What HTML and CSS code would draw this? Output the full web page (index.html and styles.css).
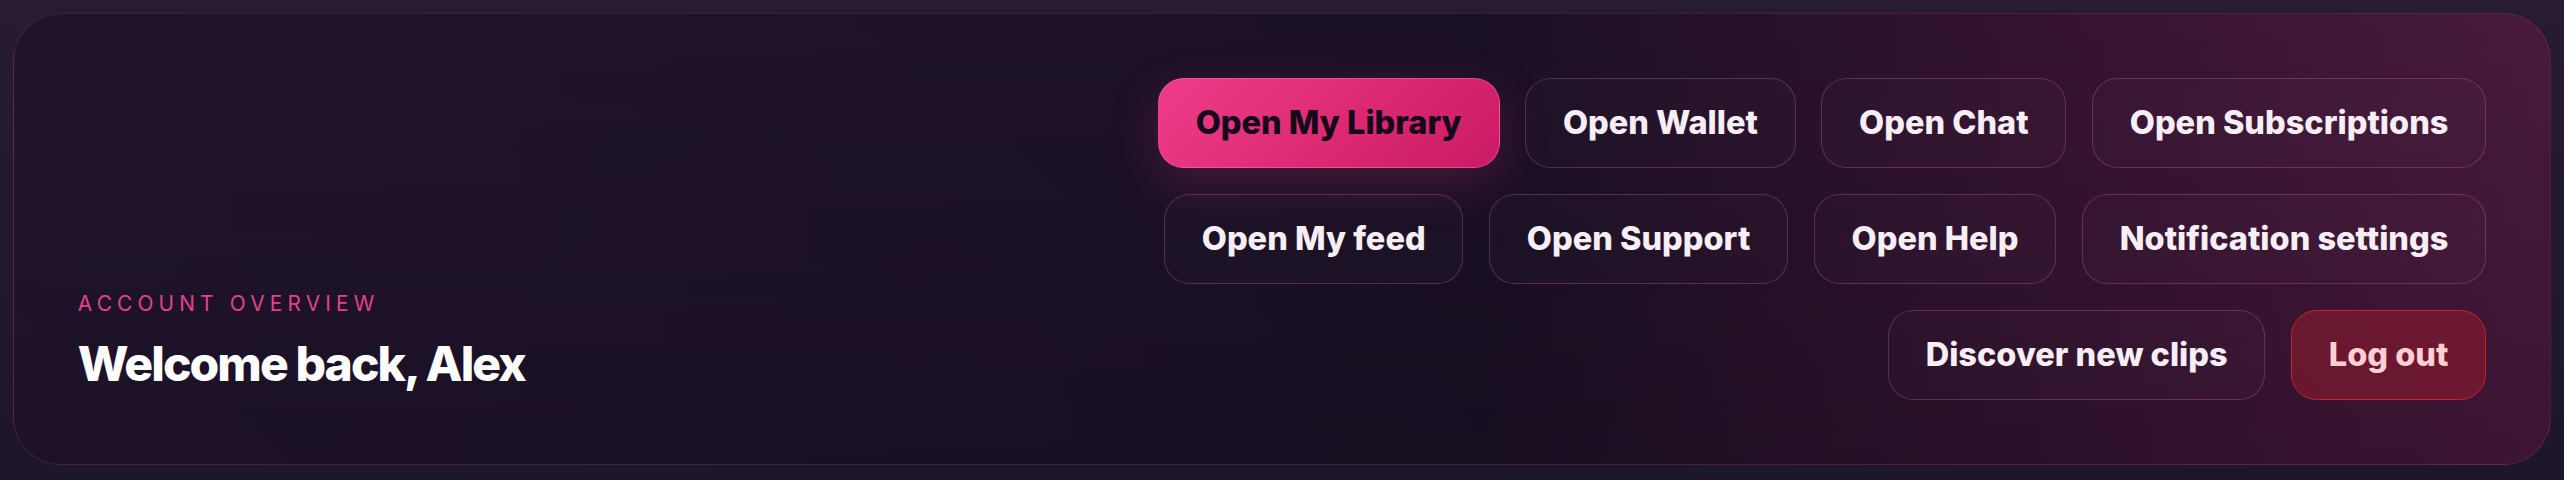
FILE: index.html
```html
<!DOCTYPE html>
<html lang="en">
<head>
<meta charset="utf-8">
<title>Account overview</title>
<link rel="stylesheet" href="styles.css">
</head>
<body>
  <header class="hero">
    <div class="hero-text">
      <p class="eyebrow">Account overview</p>
      <h1 class="title">Welcome back, Alex</h1>
    </div>
    <nav class="actions">
      <button class="btn btn-primary">Open My Library</button>
      <button class="btn">Open Wallet</button>
      <button class="btn">Open Chat</button>
      <button class="btn">Open Subscriptions</button>
      <button class="btn">Open My feed</button>
      <button class="btn">Open Support</button>
      <button class="btn">Open Help</button>
      <button class="btn">Notification settings</button>
      <button class="btn">Discover new clips</button>
      <button class="btn btn-danger">Log out</button>
    </nav>
  </header>
</body>
</html>
```

FILE: styles.css
```css
html {
  background: linear-gradient(180deg, #281b34 0%, #1d1729 100%);
  min-height: 100%;
}

body {
  margin: 0;
  padding: 12.8px;
  font-family: Inter, "Noto Sans", sans-serif;
  line-height: 1.5;
  color: #f7eef6;
}

.hero {
  display: flex;
  justify-content: space-between;
  align-items: flex-end;
  gap: 40px;
  padding: 64px;
  border: 1.6px solid rgba(236, 92, 170, 0.18);
  border-radius: 48px;
  background:
    linear-gradient(180deg, rgba(0, 0, 0, 0) 0%, rgba(8, 4, 12, 0.2) 100%),
    linear-gradient(90deg, #21152e 0%, #1d1228 40%, #1a1024 58%, #33132f 78%, #49193d 100%);
}

.hero-text {
  flex: none;
}

.eyebrow {
  margin: 0 0 9px;
  font-size: 20.8px;
  font-weight: 400;
  letter-spacing: 0.25em;
  text-transform: uppercase;
  color: #e2428c;
}

.title {
  margin: 0;
  font-size: 48px;
  font-weight: 800;
  letter-spacing: -0.04em;
  color: #ffffff;
}

.actions {
  display: flex;
  flex-wrap: wrap;
  justify-content: flex-end;
  gap: 25.6px;
  max-width: 1400px;
}

.btn {
  font-family: inherit;
  font-size: 32.5px;
  font-weight: 800;
  letter-spacing: 0;
  line-height: 48px;
  padding: 20.2px 36.8px;
  border: 1.6px solid rgba(236, 110, 190, 0.28);
  border-radius: 25.6px;
  background: rgba(255, 255, 255, 0.015);
  color: #f8eef6;
  cursor: pointer;
}

.btn-primary {
  background: linear-gradient(135deg, #ef3c89 0%, #d9286f 60%, #c91b64 100%);
  border-color: rgba(255, 120, 180, 0.45);
  color: #14081a;
  box-shadow: 0 14px 48px rgba(236, 60, 140, 0.22);
}

.btn-danger {
  background: rgba(140, 26, 46, 0.6);
  border-color: #c4242e;
  color: #ffcfd1;
}
```
